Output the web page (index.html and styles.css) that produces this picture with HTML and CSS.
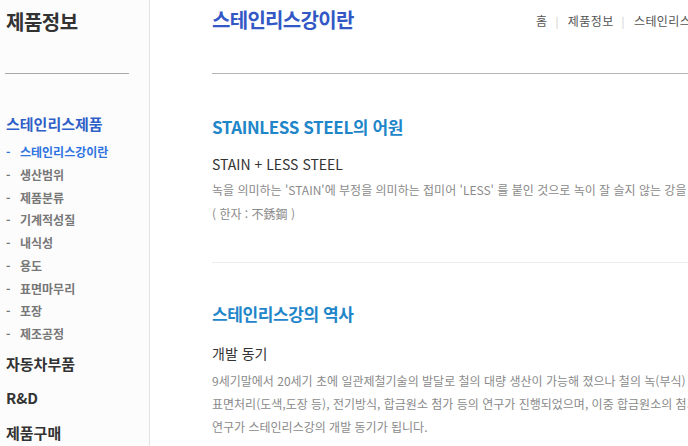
FILE: index.html
```html
<!DOCTYPE html>
<html lang="ko">
<head>
<meta charset="utf-8">
<title>스테인리스강이란</title>
<link rel="stylesheet" href="styles.css">
</head>
<body>
<div class="page">
  <aside class="sidebar">
    <h1 class="side-title">제품정보</h1>
    <hr class="side-rule">
    <nav class="side-nav">
      <div class="side-group active">스테인리스제품</div>
      <ul class="side-sub">
        <li class="on"><span class="dash">-</span>스테인리스강이란</li>
        <li><span class="dash">-</span>생산범위</li>
        <li><span class="dash">-</span>제품분류</li>
        <li><span class="dash">-</span>기계적성질</li>
        <li><span class="dash">-</span>내식성</li>
        <li><span class="dash">-</span>용도</li>
        <li><span class="dash">-</span>표면마무리</li>
        <li><span class="dash">-</span>포장</li>
        <li><span class="dash">-</span>제조공정</li>
      </ul>
      <div class="side-group">자동차부품</div>
      <div class="side-group">R&amp;D</div>
      <div class="side-group">제품구매</div>
    </nav>
  </aside>
  <main class="main">
    <header class="head">
      <h2 class="page-title">스테인리스강이란</h2>
      <div class="crumbs"><span>홈</span><span class="sep">|</span><span>제품정보</span><span class="sep">|</span><span>스테인리스강이란</span></div>
    </header>
    <hr class="main-rule">
    <section class="sec">
      <h3 class="sec-title">STAINLESS STEEL의 어원</h3>
      <h4 class="sub-title">STAIN + LESS STEEL</h4>
      <p class="txt">녹을 의미하는 'STAIN'에 부정을 의미하는 접미어 'LESS' 를 붙인 것으로 녹이 잘 슬지 않는 강을 뜻합니다.<br>( 한자 : 不銹鋼 )</p>
    </section>
    <hr class="sec-rule">
    <section class="sec sec2">
      <h3 class="sec-title">스테인리스강의 역사</h3>
      <h4 class="sub-title">개발 동기</h4>
      <p class="txt txt2">9세기말에서 20세기 초에 일관제철기술의 발달로 철의 대량 생산이 가능해 졌으나 철의 녹(부식) 문제를 해결하기 위하여<br>표면처리(도색,도장 등), 전기방식, 합금원소 첨가 등의 연구가 진행되었으며, 이중 합금원소의 첨가에 의한 내식성 향상<br>연구가 스테인리스강의 개발 동기가 됩니다.</p>
    </section>
  </main>
</div>
</body>
</html>
```
FILE: styles.css
```css
html, body {
  margin: 0;
  padding: 0;
  background: #fff;
  overflow: hidden;
}
body {
  font-family: "Noto Sans CJK KR", "Noto Sans", sans-serif;
  color: #333;
}
.page {
  display: flex;
  width: 1100px;
  min-height: 446px;
}
.sidebar {
  width: 150px;
  flex: none;
  background: #fcfcfc;
  border-right: 1px solid #e2e2e2;
  padding-left: 6px;
  box-sizing: border-box;
}
.side-title {
  margin: 8px 0 0;
  font-size: 20px;
  line-height: 28px;
  font-weight: 700;
  color: #333;
  letter-spacing: -0.5px;
}
.side-rule {
  margin: 37px 0 0 -1px;
  width: 124px;
  border: 0;
  border-top: 1px solid #aaa;
  height: 0;
}
.side-nav {
  padding-top: 39px;
}
.side-group {
  font-size: 15px;
  font-weight: 700;
  line-height: 22px;
  color: #333;
  margin-bottom: 12.5px;
}
.side-group.active {
  color: #2f5fc8;
  margin-bottom: 6px;
}
.side-sub {
  list-style: none;
  margin: 0 0 7px;
  padding: 0;
}
.side-sub li {
  font-size: 12px;
  font-weight: 700;
  line-height: 22.75px;
  color: #777;
}
.side-sub li.on {
  color: #2e73e0;
}
.dash {
  display: inline-block;
  width: 14px;
}
.main {
  margin-left: 62px;
  flex: 1;
}
.head {
  display: grid;
  grid-template-columns: 324px auto;
  align-items: center;
  height: 40px;
}
.page-title {
  margin: 0;
  font-size: 20px;
  font-weight: 700;
  color: #3358c6;
  line-height: 28px;
  letter-spacing: -0.7px;
}
.crumbs {
  font-size: 12px;
  color: #555;
  letter-spacing: 0.4px;
  white-space: nowrap;
}
.crumbs .sep {
  color: #ccc;
  margin: 0 9px 0 8px;
  font-size: 11px;
}
.main-rule {
  margin: 33px 0 0;
  border: 0;
  border-top: 1px solid #b5b5b5;
  height: 0;
}
.sec {
  padding-top: 40px;
}
.sec-title {
  margin: 0;
  font-size: 17px;
  font-weight: 700;
  line-height: 26px;
  color: #1f86c9;
  letter-spacing: -0.4px;
}
.sub-title {
  margin: 14px 0 0;
  font-size: 14px;
  font-weight: 400;
  line-height: 20px;
  color: #333;
}
.txt {
  margin: 4px 0 0;
  font-size: 12px;
  line-height: 24px;
  color: #8a8a8a;
  white-space: nowrap;
}
.sec-rule {
  margin: 36px 0 0;
  border: 0;
  border-top: 1px solid #ececec;
  height: 0;
}
.sec2 {
  padding-top: 38px;
}
.sec2 .sub-title {
  margin-top: 16px;
}
.txt2 {
  line-height: 23px;
  margin-top: 6px;
}
```
